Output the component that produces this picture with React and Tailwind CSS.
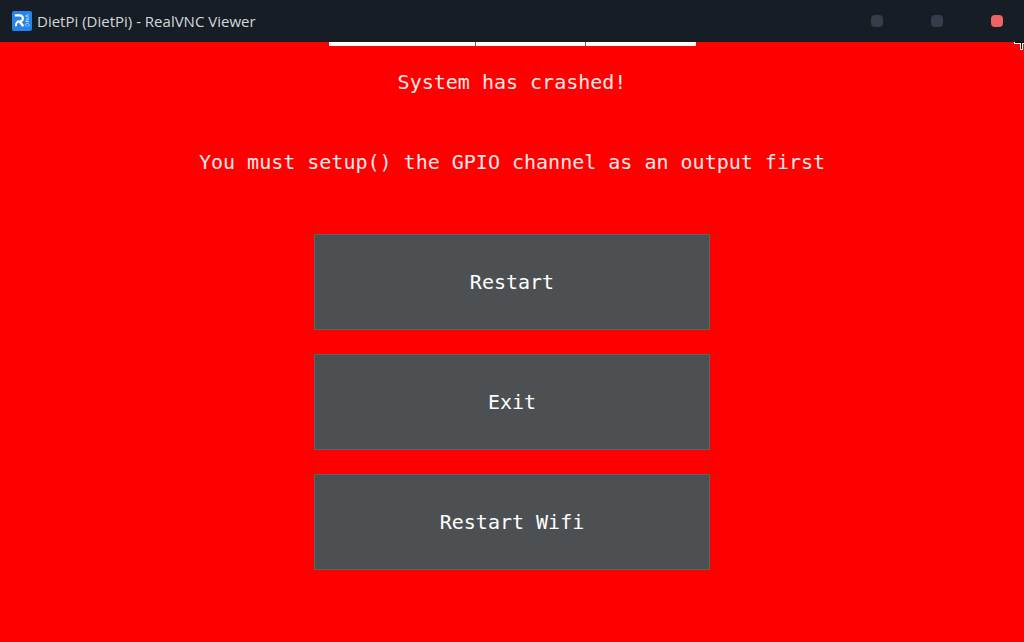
import React from "react";

const actions = ["Restart", "Exit", "Restart Wifi"];

function Logo() {
  return (
    <svg className="h-5 w-5 shrink-0" viewBox="0 0 20 20" fill="none" aria-hidden="true">
      <rect width="20" height="20" rx="2" fill="#2684ea" />
      <path d="M2.8 4.300H7.800a3.100 3.100 0 0 1 0 6.200H5.200" stroke="#fff" strokeWidth="2.200" />
      <path d="M7.500 10.300L11.300 15.300" stroke="#fff" strokeWidth="2.400" />
      <path d="M6.800 10.500C4.800 10.500 3.900 12.200 3.900 15.200" stroke="#fff" strokeWidth="1.800" />
      <path
        d="M17 3.500l-3.500 1.500 3.500 1.500M13.500 8h3.300l-3.100 2.500H17M14.300 15.500c-1.200-1.300-.6-3.200 1-3.200s2.200 1.900 1 3.200"
        stroke="#b9dcff"
        strokeWidth="0.9"
      />
    </svg>
  );
}

function Cursor() {
  return (
    <svg
      className="absolute top-0 right-0 h-2 w-[10px]"
      viewBox="0 0 10 8"
      shapeRendering="crispEdges"
      aria-hidden="true"
    >
      <path d="M0 0h10v2H9v6H6V2H0z" fill="#fff" />
      <path d="M1 0h9v1H8v6H7V1H1z" fill="#000" />
    </svg>
  );
}

function TitleBar() {
  return (
    <header className="flex h-[42px] shrink-0 items-center bg-[#161d24] pr-[21px] pl-3">
      <Logo />
      <h1 className="ml-[5px] font-['Open_Sans',sans-serif] text-[15px] leading-5 text-[#d3d7dc]">
        DietPi (DietPi) - RealVNC Viewer
      </h1>
      <div className="ml-auto flex items-center gap-12">
        <button type="button" aria-label="Minimize" className="h-3 w-3 rounded-[4px] bg-[#363c49]" />
        <button type="button" aria-label="Maximize" className="h-3 w-3 rounded-[4px] bg-[#363c49]" />
        <button type="button" aria-label="Close" className="h-3 w-3 rounded-[4px] bg-[#ec6464]" />
      </div>
    </header>
  );
}

export default function App() {
  return (
    <div className="flex min-h-screen flex-col bg-[#ff0000]">
      <TitleBar />
      <main className="relative flex grow flex-col items-center overflow-hidden px-4 pt-6 pb-6 font-['DejaVu_Sans_Mono',monospace] text-[20px] leading-8 text-white">
        <div className="absolute inset-x-0 top-0 flex h-1 justify-center">
          <div className="w-[147px] border-r border-[#666666] bg-white" />
          <div className="w-[110px] border-r border-[#666666] bg-white" />
          <div className="w-[110px] bg-white" />
        </div>
        <Cursor />
        <p className="text-center text-[#ffe8e8]">System has crashed!</p>
        <p className="mt-12 text-center text-[#ffe8e8]">
          You must setup() the GPIO channel as an output first
        </p>
        <div className="mt-14 flex w-full max-w-[396px] flex-col gap-6">
          {actions.map((label) => (
            <button
              key={label}
              type="button"
              className="h-24 border border-[#5d6462] bg-[#4d5052] text-center"
            >
              {label}
            </button>
          ))}
        </div>
      </main>
    </div>
  );
}
